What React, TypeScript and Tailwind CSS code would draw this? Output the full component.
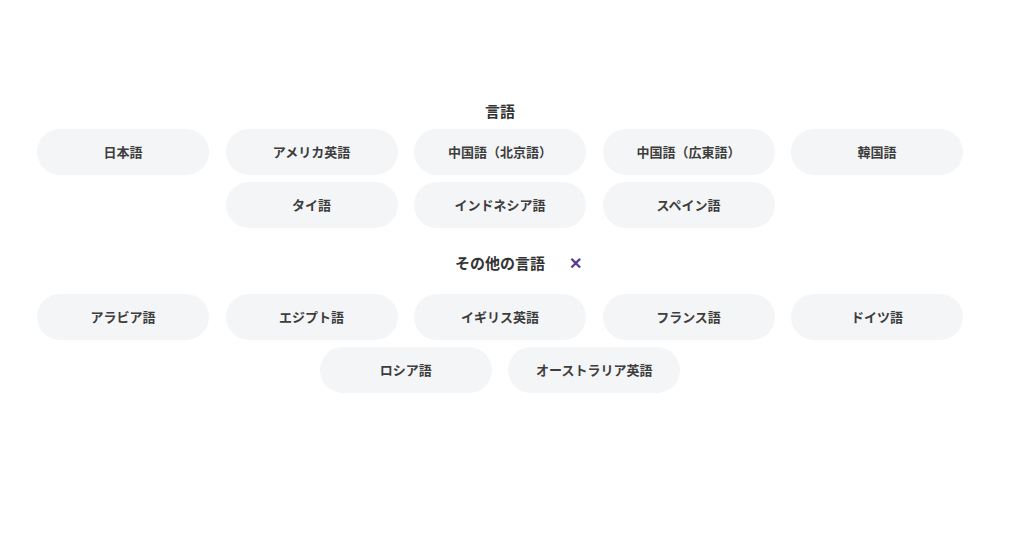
const main = ["日本語", "アメリカ英語", "中国語（北京語）", "中国語（広東語）", "韓国語", "タイ語", "インドネシア語", "スペイン語"];
const other = ["アラビア語", "エジプト語", "イギリス英語", "フランス語", "ドイツ語", "ロシア語", "オーストラリア英語"];

function Pill({ label }: { label: string }) {
  return (
    <button className="w-[172px] h-[46px] rounded-full bg-[#f4f5f7] text-[13px] font-bold text-[#3d3d3d] flex items-center justify-center">
      {label}
    </button>
  );
}

export default function App() {
  return (
    <div
      className="w-[1024px] h-[538px] bg-white pl-[37px] pt-[101px]"
      style={{ fontFamily: '"Noto Sans CJK JP", "Noto Sans", sans-serif' }}
    >
      <div className="w-[926px] flex flex-col items-center">
        <h2 className="text-[15px] font-bold text-[#333] leading-[20px]">言語</h2>
        <div className="mt-[8px] flex flex-wrap justify-center gap-x-[16.5px] gap-y-[7px]">
          {main.map((l) => (
            <Pill key={l} label={l} />
          ))}
        </div>
        <div className="mt-[24px] relative h-[22px] flex items-center">
          <h2 className="text-[15px] font-bold text-[#333]">その他の言語</h2>
          <span className="absolute left-[calc(100%+24px)] top-[2px] text-[#5b3d92] text-[16px] font-bold leading-none">✕</span>
        </div>
        <div className="mt-[20px] flex flex-wrap justify-center gap-x-[16.5px] gap-y-[7px]">
          {other.map((l) => (
            <Pill key={l} label={l} />
          ))}
        </div>
      </div>
    </div>
  );
}
